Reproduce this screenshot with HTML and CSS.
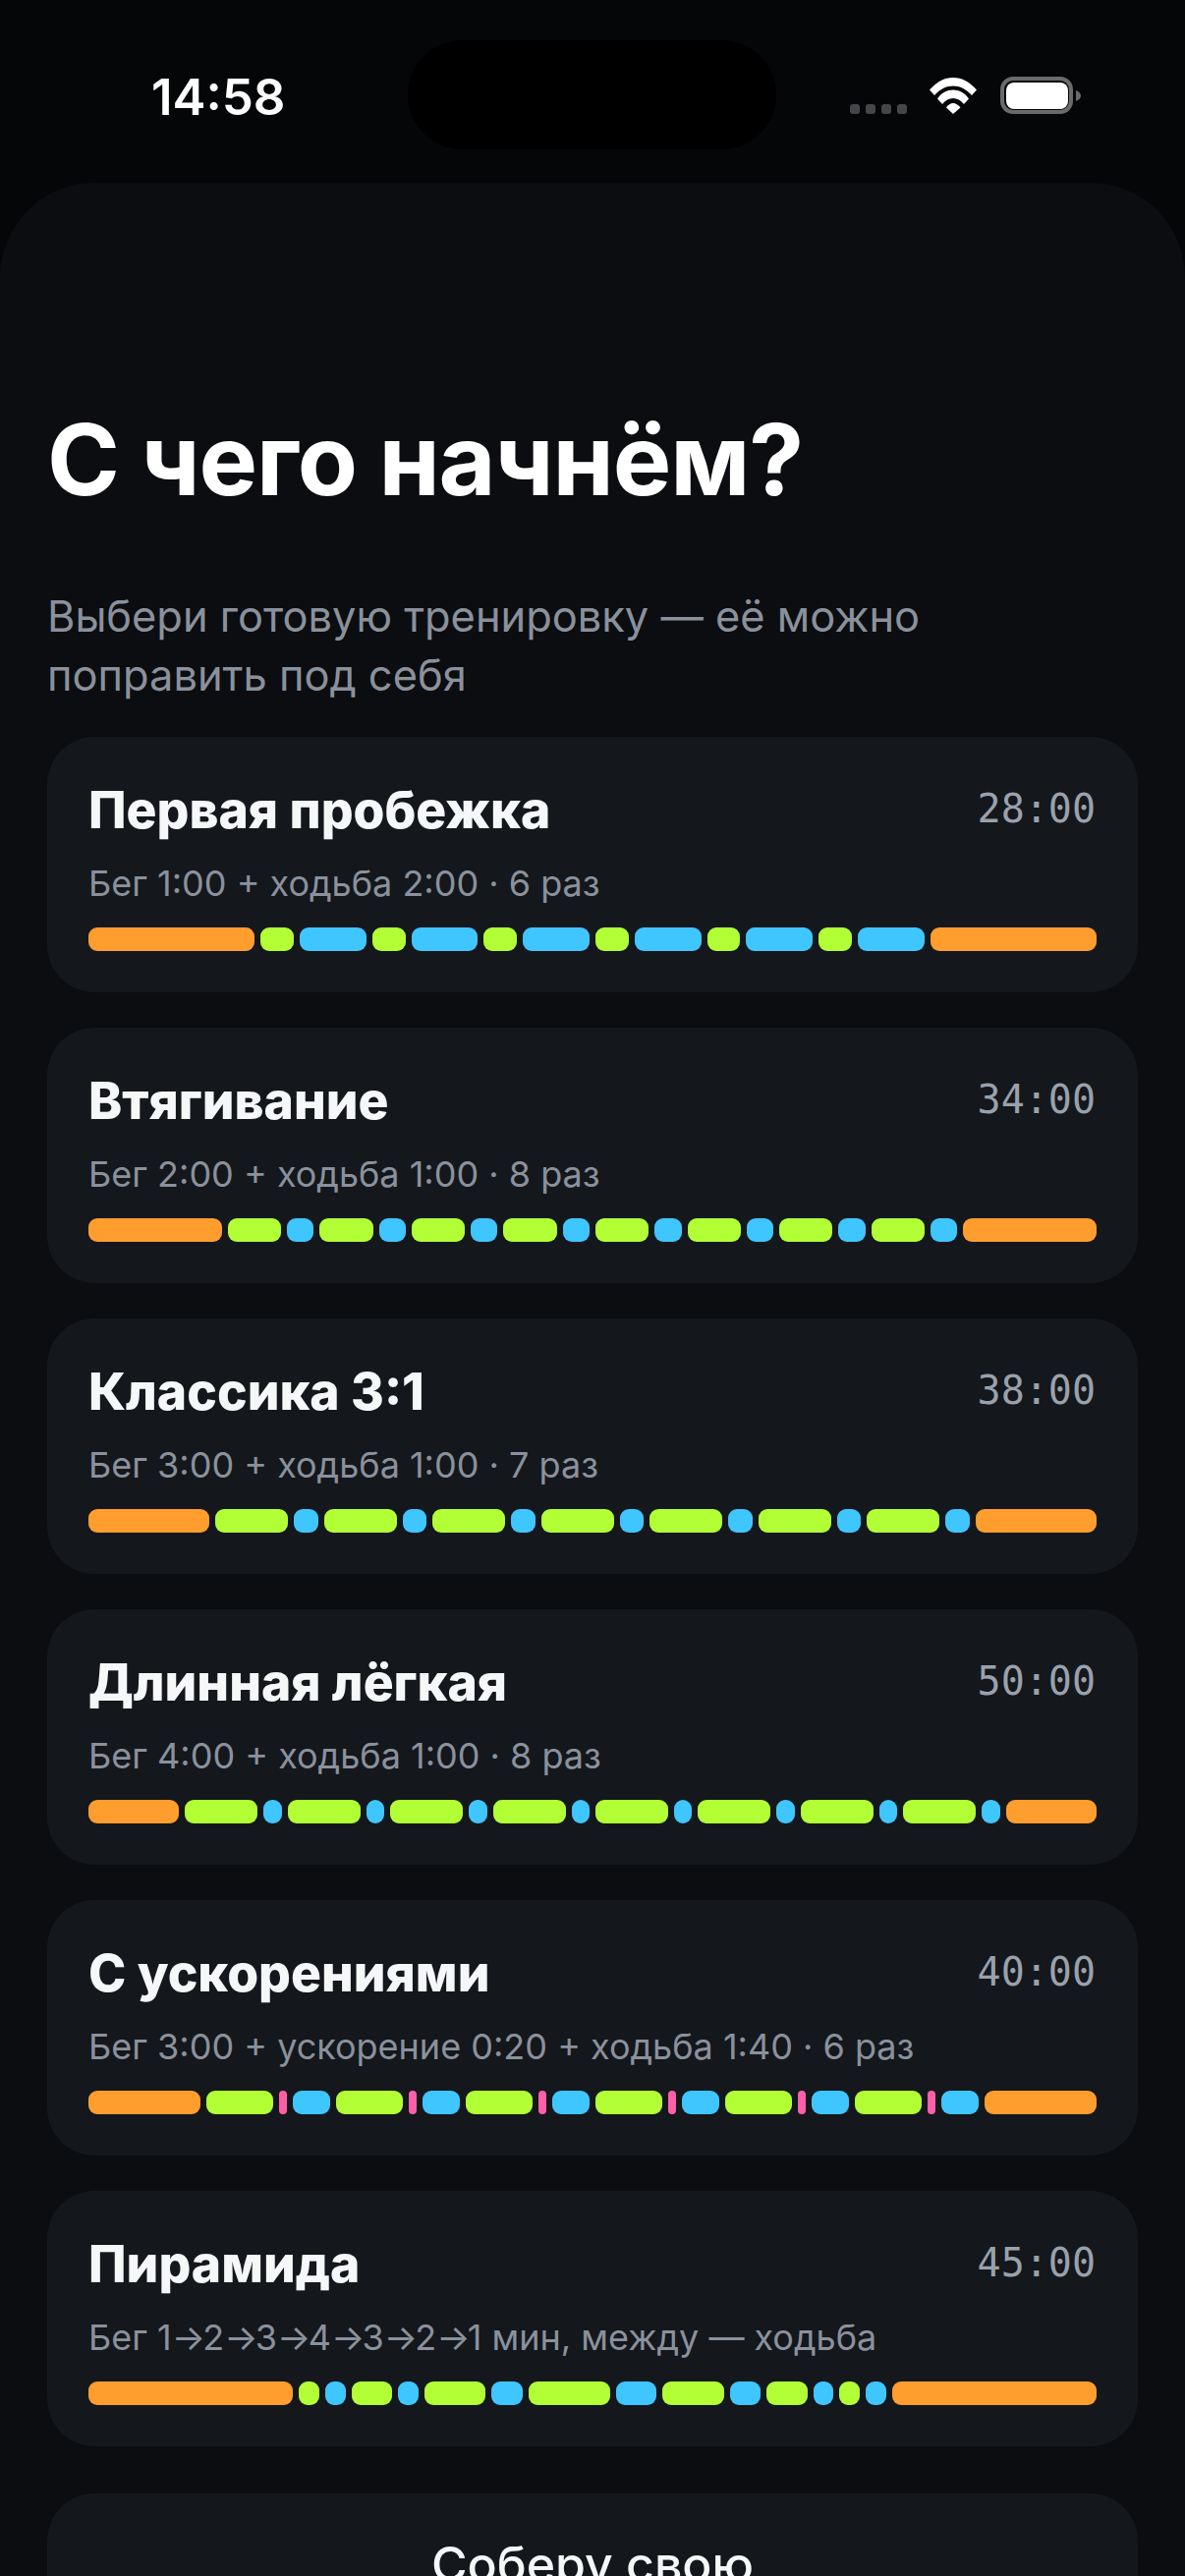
FILE: index.html
```html
<!DOCTYPE html>
<html lang="ru">
<head>
<meta charset="utf-8">
<title>С чего начнём?</title>
<link rel="stylesheet" href="styles.css">
</head>
<body>
<div class="phone">
  <header class="status">
    <span class="clock">14:58</span>
    <div class="island"></div>
    <div class="indicators">
      <div class="dots"><i></i><i></i><i></i><i></i></div>
      <svg class="wifi" viewBox="0 0 50 37" width="50" height="37"><path fill="#fff" d="M1 12.5C8 4.5 16 0 25 0s17 4.5 24 12.5L44 18C38 11.5 32 8.5 25 8.5S12 11.5 6 18Z"/><path fill="#fff" d="M9 21.5C13 15.5 19 12.5 25 12.5s12 3 16 9L36 27C33 23 29 21 25 21s-8 2-11 6Z"/><path fill="#fff" d="M18 30.5C20 27.5 22.5 26 25 26s5 1.500 7.500 4.500L25 37Z"/></svg>
      <svg class="battery" viewBox="0 0 82 38" width="82" height="38"><rect x="2" y="2" width="70" height="34" rx="11" fill="none" stroke="#6a6a6a" stroke-width="4"/><rect x="6" y="6" width="63" height="27" rx="8" fill="#fff"/><path fill="#6a6a6a" d="M77 14c3 1 5 3 5 5.500S80 24 77 25Z"/></svg>
    </div>
  </header>
  <main class="sheet">
    <h1 class="heading">С чего начнём?</h1>
    <p class="lead">Выбери готовую тренировку — её можно поправить под себя</p>
    <section class="plans">
      <article class="plan">
        <div class="plan-top"><h2 class="plan-name">Первая пробежка</h2><span class="plan-time">28:00</span></div>
        <p class="plan-desc">Бег 1:00 + ходьба 2:00 · 6 раз</p>
        <div class="bar" id="b1"></div>
      </article>
      <article class="plan">
        <div class="plan-top"><h2 class="plan-name">Втягивание</h2><span class="plan-time">34:00</span></div>
        <p class="plan-desc">Бег 2:00 + ходьба 1:00 · 8 раз</p>
        <div class="bar" id="b2"></div>
      </article>
      <article class="plan">
        <div class="plan-top"><h2 class="plan-name">Классика 3:1</h2><span class="plan-time">38:00</span></div>
        <p class="plan-desc">Бег 3:00 + ходьба 1:00 · 7 раз</p>
        <div class="bar" id="b3"></div>
      </article>
      <article class="plan">
        <div class="plan-top"><h2 class="plan-name">Длинная лёгкая</h2><span class="plan-time">50:00</span></div>
        <p class="plan-desc">Бег 4:00 + ходьба 1:00 · 8 раз</p>
        <div class="bar" id="b4"></div>
      </article>
      <article class="plan">
        <div class="plan-top"><h2 class="plan-name">С ускорениями</h2><span class="plan-time">40:00</span></div>
        <p class="plan-desc">Бег 3:00 + ускорение 0:20 + ходьба 1:40 · 6 раз</p>
        <div class="bar" id="b5"></div>
      </article>
      <article class="plan">
        <div class="plan-top"><h2 class="plan-name">Пирамида</h2><span class="plan-time">45:00</span></div>
        <p class="plan-desc">Бег 1<span class="arrow">→</span>2<span class="arrow">→</span>3<span class="arrow">→</span>4<span class="arrow">→</span>3<span class="arrow">→</span>2<span class="arrow">→</span>1 мин, между — ходьба</p>
        <div class="bar" id="b6"></div>
      </article>
    </section>
    <button class="custom" type="button">Соберу свою</button>
  </main>
</div>
<script src="app.js"></script>
</body>
</html>
```

FILE: styles.css
```css
* { box-sizing: border-box; margin: 0; padding: 0; }
html, body { width: 1206px; height: 2622px; overflow: hidden; background: #050608; }
body { font-family: Inter, "Noto Sans", sans-serif; color: #f6f7f9; }
.phone { position: relative; width: 1206px; height: 2622px; display: flex; flex-direction: column; overflow: hidden; }

.status { height: 186px; flex: none; display: flex; justify-content: space-between; align-items: flex-start; padding: 69px 106px 0 154px; }
.clock { font-size: 51px; font-weight: 600; line-height: 60px; color: #fff; }
.island { position: absolute; left: 415px; top: 41px; width: 375px; height: 111px; border-radius: 56px; background: #000; }
.indicators { display: flex; align-items: flex-end; padding-top: 9px; }
.dots { display: flex; gap: 6px; margin-right: 22px; }
.dots i { display: block; width: 10px; height: 10px; border-radius: 3px; background: #444649; }
.wifi { margin-right: 23px; }
.battery { display: block; }

.sheet { flex: 1; min-height: 0; background: #0b0d10; border-radius: 96px 96px 0 0; padding: 221px 48px 0; display: flex; flex-direction: column; }
.heading { font-size: 100px; font-weight: 700; line-height: 122px; color: #fff; letter-spacing: -1.1px; }
.lead { margin-top: 68px; font-size: 43.4px; line-height: 60px; color: #8a919c; font-weight: 400; width: 960px; }

.plans { margin-top: 33px; display: flex; flex-direction: column; gap: 36px; }
.plan { height: 260px; border-radius: 48px; background: #14171c; padding: 44px 42px 0; display: flex; flex-direction: column; }
.plan-top { display: flex; justify-content: space-between; align-items: flex-start; }
.plan-name { font-size: 51.6px; line-height: 60px; font-weight: 800; color: #f6f7f9; }
.plan-time { font-family: "DejaVu Sans Mono", "Liberation Mono", monospace; font-size: 40px; line-height: 52px; color: #9aa1ab; padding-top: 3px; margin-right: 1px; }
.plan-desc { margin-top: 22px; font-size: 36px; line-height: 46px; color: #8a919c; }
.arrow { letter-spacing: -2.8px; }
.bar { margin-top: 22px; height: 24px; display: flex; gap: 6px; }
.seg { flex-basis: 0; min-width: 0; border-radius: 9px; }
.seg-warm { background: #ff9d2e; }
.seg-run { background: #b2ff36; }
.seg-walk { background: #3fc6ff; }
.seg-sprint { background: #ff5fa8; }

.custom { margin-top: 48px; flex: none; height: 144px; border: 0; border-radius: 48px; background: #14171c; color: #f6f7f9; font-family: inherit; font-size: 50px; font-weight: 500; }
```

FILE: app.js
```js
const w = ["warm", 300];
const repeat = (n, parts) => Array.from({ length: n }).flatMap(() => parts);
const plans = {
  b1: [w, ...repeat(6, [["run", 60], ["walk", 120]]), w],
  b2: [w, ...repeat(8, [["run", 120], ["walk", 60]]), w],
  b3: [w, ...repeat(7, [["run", 180], ["walk", 60]]), w],
  b4: [w, ...repeat(8, [["run", 240], ["walk", 60]]), w],
  b5: [w, ...repeat(6, [["run", 180], ["sprint", 20], ["walk", 100]]), w],
  b6: [["warm", 600], ["run", 60], ["walk", 60], ["run", 120], ["walk", 60], ["run", 180], ["walk", 90], ["run", 240], ["walk", 120], ["run", 180], ["walk", 90], ["run", 120], ["walk", 60], ["run", 60], ["walk", 60], ["warm", 600]]
};
for (const [id, segs] of Object.entries(plans)) {
  const bar = document.getElementById(id);
  for (const [kind, secs] of segs) {
    const el = document.createElement("div");
    el.className = "seg seg-" + kind;
    el.style.flexGrow = secs;
    bar.appendChild(el);
  }
}
```
